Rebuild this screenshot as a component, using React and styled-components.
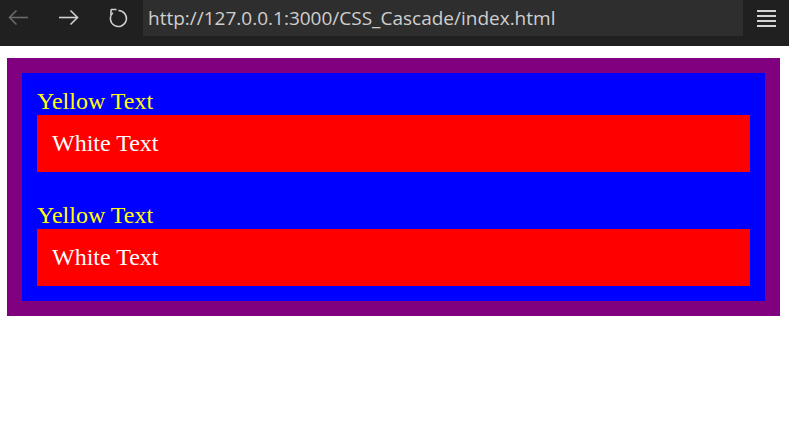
import React from "react";
import styled, { createGlobalStyle } from "styled-components";

const GlobalStyle = createGlobalStyle`
  html, body {
    margin: 0;
    padding: 0;
    background: #fff;
  }
`;

const Toolbar = styled.header`
  height: 46px;
  background-color: #202020;
  display: flex;
  align-items: flex-start;
`;

const NavButtons = styled.div`
  display: flex;
  align-items: center;
  height: 34px;
  padding-left: 8px;
  gap: 29px;
  width: 135px;
  box-sizing: border-box;
`;

const IconButton = styled.span`
  display: flex;
  align-items: center;
  justify-content: center;
  width: 21px;
  height: 21px;
  color: ${({ dim }) => (dim ? "#6a6a6a" : "#d0d0d0")};
`;

const Address = styled.div`
  margin-left: 8px;
  width: 600px;
  height: 36px;
  background-color: #2e2e2e;
  display: flex;
  align-items: center;
  padding-left: 5px;
  box-sizing: border-box;
  font-family: "Open Sans", "Noto Sans", sans-serif;
  font-size: 19px;
  color: #cfcfcf;
`;

const Menu = styled.div`
  margin-left: 14px;
  height: 36px;
  display: flex;
  flex-direction: column;
  justify-content: center;
  gap: 3px;
  padding-top: 1px;
  box-sizing: border-box;
`;

const MenuLine = styled.span`
  display: block;
  width: 19px;
  height: 2px;
  background-color: #d4d4d4;
`;

const Page = styled.main`
  margin: 12px 9px 0 7px;
  font-family: "Liberation Serif", "Times New Roman", serif;
  font-size: 24px;
`;

const Outer = styled.div`
  background-color: purple;
  padding: 15px;
`;

const Inner = styled.div`
  background-color: blue;
  padding: 15px;
  display: flex;
  flex-direction: column;
  gap: 30px;
`;

const Group = styled.section``;

const YellowLine = styled.div`
  color: yellow;
  line-height: 27px;
`;

const RedBox = styled.div`
  background-color: red;
  color: #fff;
  padding: 15px;
  line-height: 27px;
`;

const Arrow = ({ flip }) => (
  <svg width="21" height="21" viewBox="0 0 21 21" fill="none" stroke="currentColor" strokeWidth="1.6">
    {flip ? (
      <>
        <path d="M1 10.5h18.5" />
        <path d="M12.5 3.5l7 7-7 7" />
      </>
    ) : (
      <>
        <path d="M20 10.5H1.5" />
        <path d="M8.5 3.5l-7 7 7 7" />
      </>
    )}
  </svg>
);

const Refresh = () => (
  <svg width="21" height="21" viewBox="0 0 21 21" fill="none" stroke="currentColor" strokeWidth="1.6">
    <path d="M10.5 3.5A8 8 0 1 1 4.8 5.8" />
    <path d="M3 2.5h5.5M3 2.5V8" />
  </svg>
);

const App = () => {
  const groups = [1, 2];
  return (
    <>
      <GlobalStyle />
      <Toolbar>
        <NavButtons>
          <IconButton dim>
            <Arrow />
          </IconButton>
          <IconButton>
            <Arrow flip />
          </IconButton>
          <IconButton>
            <Refresh />
          </IconButton>
        </NavButtons>
        <Address>http://127.0.0.1:3000/CSS_Cascade/index.html</Address>
        <Menu>
          <MenuLine />
          <MenuLine />
          <MenuLine />
          <MenuLine />
        </Menu>
      </Toolbar>
      <Page>
        <Outer>
          <Inner>
            {groups.map((g) => (
              <Group key={g}>
                <YellowLine>Yellow Text</YellowLine>
                <RedBox>White Text</RedBox>
              </Group>
            ))}
          </Inner>
        </Outer>
      </Page>
    </>
  );
};

export default App;
